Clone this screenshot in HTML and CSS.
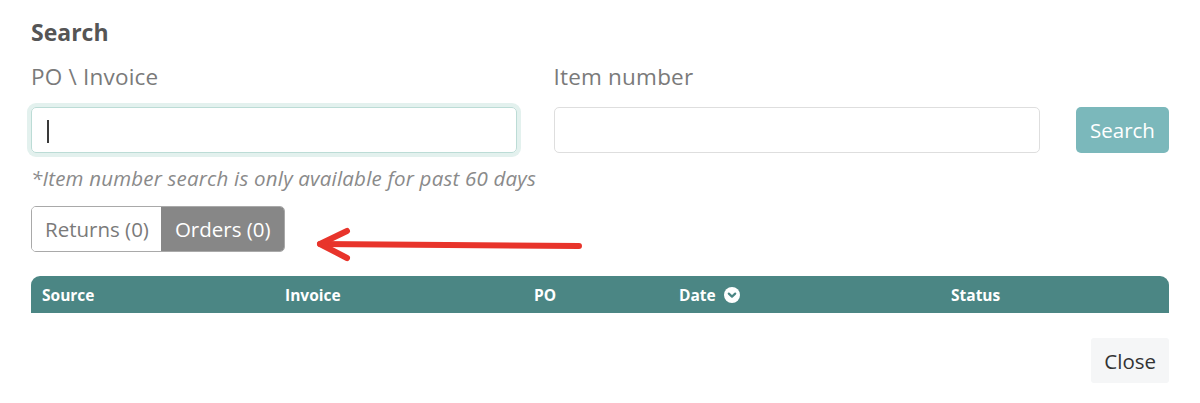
FILE: index.html
```html
<!DOCTYPE html>
<html lang="en">
<head>
    <meta charset="UTF-8">
    <meta name="viewport" content="width=device-width, initial-scale=1.0">
    <title>Search</title>
    <link rel="stylesheet" href="styles.css">
</head>
<body>
    <div class="panel">
        <h2>Search</h2>
        <form class="search-form">
            <label for="poInvoice">PO \ Invoice</label>
            <label for="itemNumber">Item number</label>
            <span></span>
            <input type="text" id="poInvoice" class="focused">
            <input type="text" id="itemNumber">
            <button type="button" class="btn-search">Search</button>
        </form>
        <p class="note">*Item number search is only available for past 60 days</p>

        <div class="tabs-row">
            <div class="tabs">
                <button type="button" class="tab">Returns (0)</button>
                <button type="button" class="tab active">Orders (0)</button>
            </div>
            <svg class="arrow" width="280" height="60" viewBox="0 0 280 60">
                <path d="M289 38 L548 40" />
                <path d="M316 25 L289 38 L316 52" fill="none" />
            </svg>
        </div>

        <div class="table-head">
            <div>Source</div>
            <div>Invoice</div>
            <div>PO</div>
            <div class="sortable">Date
                <svg width="16" height="16" viewBox="0 0 16 16">
                    <circle cx="8" cy="8" r="8" fill="#fff" />
                    <path d="M4.8 6.6 L8 9.6 L11.2 6.6" fill="none" stroke="#4b8684" stroke-width="2.2" stroke-linecap="round" stroke-linejoin="round" />
                </svg>
            </div>
            <div>Status</div>
        </div>

        <div class="footer">
            <button type="button" class="btn-close">Close</button>
        </div>
    </div>
</body>
</html>
```

FILE: styles.css
```css
body {
    font-family: "Open Sans", Arial, sans-serif;
    background-color: #fff;
    margin: 0;
    padding: 0;
}

.panel {
    width: 1138px;
    padding: 17px 31px 0;
}

h2 {
    margin: 0;
    font-size: 23px;
    line-height: 30px;
    font-weight: 700;
    color: #555;
}

.search-form {
    display: grid;
    grid-template-columns: 486px 486px 93px;
    column-gap: 36.5px;
    margin-top: 15px;
}

label {
    font-size: 22.5px;
    line-height: 30px;
    letter-spacing: 0.2px;
    color: #7a7a7a;
    margin-bottom: 15px;
}

input {
    height: 46px;
    box-sizing: border-box;
    padding: 0 12px;
    border: 1px solid #dedede;
    border-radius: 5px;
    font-family: inherit;
    font-size: 18px;
    outline: none;
}

input.focused {
    border-color: #bcdcd6;
    box-shadow: 0 0 0 4px #e3f1ee;
    background: linear-gradient(#3a3a3a, #3a3a3a) no-repeat 15px 12px / 2px 23px;
}

.btn-search {
    height: 46px;
    border: none;
    border-radius: 5px;
    background-color: #7bb8bb;
    color: #fff;
    font-family: inherit;
    font-size: 20.5px;
}

.note {
    margin: 13px 0 0;
    font-size: 20.5px;
    line-height: 24px;
    letter-spacing: 0.2px;
    font-style: italic;
    color: #8a8a8a;
}

.tabs-row {
    position: relative;
    margin-top: 16px;
}

.tabs {
    display: inline-flex;
    height: 46px;
    border: 1px solid #a9a9a9;
    border-radius: 5px;
    overflow: hidden;
    box-sizing: border-box;
    vertical-align: top;
}

.tab {
    border: none;
    background: #fff;
    padding: 0 12px 0 13px;
    font-family: inherit;
    font-size: 20.5px;
    color: #7a7a7a;
}

.tab.active {
    background-color: #878787;
    color: #fff;
    padding: 0 13px 0 14px;
}

.arrow {
    position: absolute;
    left: 0;
    top: 0;
    overflow: visible;
}

.arrow path {
    stroke: #e8342b;
    stroke-width: 6;
    stroke-linecap: round;
    stroke-linejoin: round;
}

.table-head {
    display: grid;
    grid-template-columns: 243px 249px 145px 272px 1fr;
    height: 37px;
    margin-top: 24px;
    background-color: #4b8684;
    border-radius: 9px 9px 0 0;
    color: #fff;
    font-size: 15.5px;
    font-weight: 700;
    align-items: center;
}

.table-head div {
    padding-left: 11px;
}

.sortable {
    display: flex;
    align-items: center;
    gap: 8px;
}

.footer {
    display: flex;
    justify-content: flex-end;
    margin-top: 25px;
}

.btn-close {
    height: 45px;
    padding: 0 13px;
    border: none;
    border-radius: 3px;
    background-color: #f5f6f7;
    color: #333;
    font-family: inherit;
    font-size: 20.5px;
}
```
